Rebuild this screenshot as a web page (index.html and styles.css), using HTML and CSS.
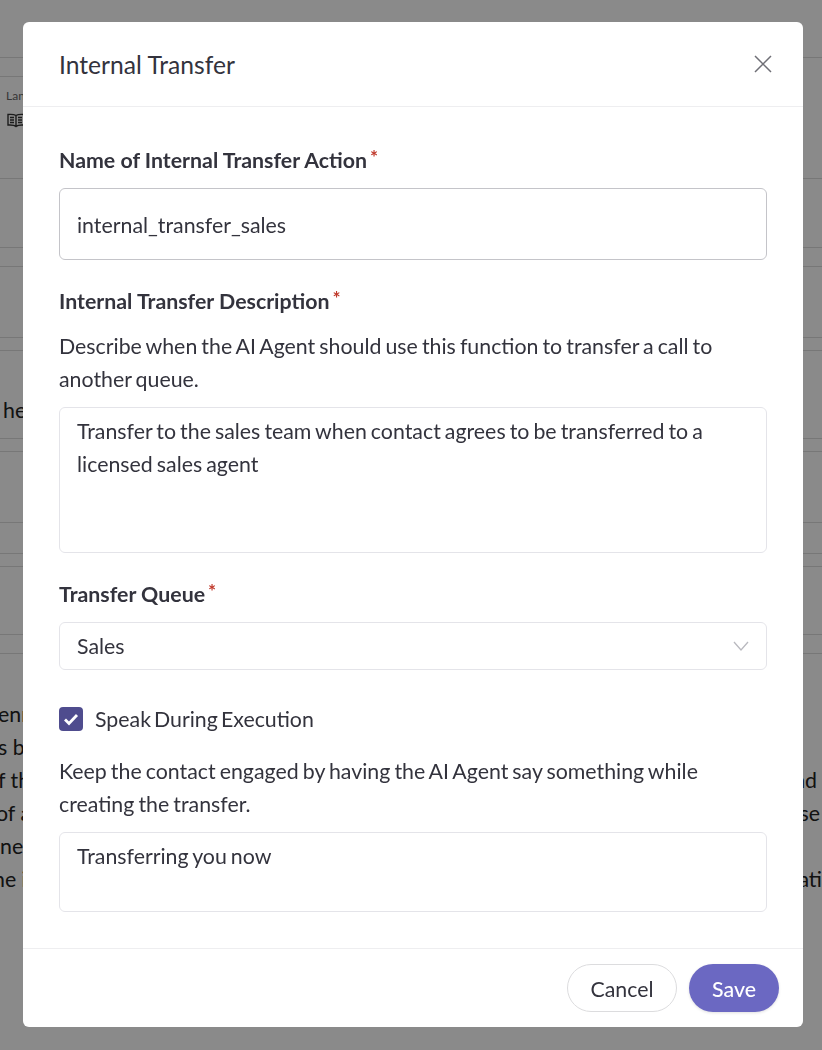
FILE: index.html
```html
<!DOCTYPE html>
<html lang="en">
<head>
<meta charset="utf-8">
<title>Internal Transfer</title>
<link rel="stylesheet" href="styles.css">
</head>
<body>
<div class="page">
  <div class="row h58"></div>
  <div class="row h121 split">
    <div class="sub s19"></div>
    <div class="sub s71">
      <div class="mini">Language</div>
      <svg class="book" width="20" height="16" viewBox="0 0 20 16" fill="none" stroke="#333" stroke-width="1.400"><path d="M9 2.500C7.500 1.500 4 1.300 1 1.500v10.500c3-.2 6.500 0 8 1.500 1.500-1.500 5-1.700 8-1.500V1.500c-3-.2-6.500 0-8 1zM9 2.500v11M3 4.500h4M3 7h4M3 9.500h4M11 4.500h4M11 7h4M11 9.500h4"/></svg>
    </div>
  </div>
  <div class="row h69"></div>
  <div class="row h19"></div>
  <div class="row h71"></div>
  <div class="row h13"></div>
  <div class="row h88"><span class="frag">he</span></div>
  <div class="row h13"></div>
  <div class="row h71"></div>
  <div class="row h31"></div>
  <div class="row h13"></div>
  <div class="row h68"></div>
  <div class="row h19"></div>
  <div class="para">
    <div class="pl"><span>enn</span></div>
    <div class="pl"><span>s b</span></div>
    <div class="pl"><span>f th</span><span>nd</span></div>
    <div class="pl"><span class="sh4">of a</span><span class="r2">se</span></div>
    <div class="pl"><span class="sh2">ne</span></div>
    <div class="pl"><span class="sh7">ne i</span><span class="r3">ati</span></div>
  </div>
</div>

<div class="overlay">
  <div class="modal">
    <header class="head">
      <h1 class="title">Internal Transfer</h1>
      <svg class="close" width="18" height="18" viewBox="0 0 18 18" fill="none" stroke="#6f6f76" stroke-width="1.5"><path d="M1 1l16 16M17 1L1 17"/></svg>
    </header>
    <div class="body">
      <div class="label">Name of Internal Transfer Action<span class="req">*</span></div>
      <div class="field f-name">internal_transfer_sales</div>
      <div class="label next">Internal Transfer Description<span class="req">*</span></div>
      <p class="desc">Describe when the AI Agent should use this function to transfer a call to another queue.</p>
      <div class="field area f-desc">Transfer to the sales team when contact agrees to be transferred to a licensed sales agent</div>
      <div class="label next">Transfer Queue<span class="req">*</span></div>
      <div class="field f-sel">
        <span>Sales</span>
        <svg width="16" height="10" viewBox="0 0 16 10" fill="none" stroke="#b9b9bf" stroke-width="1.300"><path d="M1 1l7 8 7-8"/></svg>
      </div>
      <div class="check">
        <span class="box"><svg width="16" height="13" viewBox="0 0 16 13" fill="none" stroke="#fff" stroke-width="2.800"><path d="M2 6.500l4 4 8-8.500"/></svg></span>
        <span class="speak">Speak During Execution</span>
      </div>
      <p class="desc">Keep the contact engaged by having the AI Agent say something while creating the transfer.</p>
      <div class="field area f-say">Transferring you now</div>
    </div>
    <footer class="foot">
      <button class="btn cancel">Cancel</button>
      <button class="btn save">Save</button>
    </footer>
  </div>
</div>
</body>
</html>
```
FILE: styles.css
```css
* { box-sizing: border-box; }
html, body { margin: 0; height: 100%; }
body { font-family: Lato, "Open Sans", sans-serif; color: #33333d; background: #fff; overflow: hidden; }
.page { height: 1050px; overflow: hidden; color: #222; font-size: 21.33px; }
.row { border-bottom: 1px solid #dcdcdc; }
.h58 { height: 58px; }
.h121 { height: 121px; }
.h69 { height: 69px; }
.h19 { height: 19px; }
.h71 { height: 71px; }
.h13 { height: 13px; }
.h88 { height: 88px; padding: 43px 0 0 3px; line-height: 33px; }
.h31 { height: 31px; }
.h68 { height: 68px; }
.split { display: flex; flex-direction: column; }
.sub { width: 200px; padding-left: 6px; border-bottom: 1px solid #dcdcdc; }
.sub:last-child { border-bottom: 0; }
.s19 { height: 19px; }
.s71 { height: 71px; padding-top: 12px; }
.mini { font-size: 12px; line-height: 14px; color: #666; }
.book { display: block; margin-top: 10px; margin-left: 1px; }
.para { padding-top: 44px; line-height: 33px; overflow: hidden; }
.pl { display: flex; justify-content: space-between; height: 33px; padding-right: 5px; margin-left: -2px; }
.sh2 { margin-left: 2px; }
.sh4 { margin-left: -2px; }
.sh7 { margin-left: -5px; }
.r2 { margin-right: -3px; }
.r3 { margin-right: -5px; }
.overlay { position: fixed; inset: 0; background: rgba(0,0,0,.46); }
.modal { position: absolute; left: 23px; top: 22px; width: 780px; height: 1005px; background: #fff; border-radius: 6px; display: flex; flex-direction: column; }
.head { height: 85px; border-bottom: 1px solid #eeeef0; display: flex; align-items: center; justify-content: space-between; padding: 0 31px 0 36px; flex: none; }
.title { margin: 0; font-size: 24.67px; font-weight: 400; line-height: 33px; }
.close { margin-top: -1px; }
.body { flex: 1; padding: 37px 36px 0; font-size: 21.33px; line-height: 33px; }
.label { font-weight: 700; height: 33px; }
.next { margin-top: 25px; }
.req { color: #c0392b; font-size: 19px; font-weight: 700; line-height: 0; position: relative; top: -4px; margin-left: 3px; }
.desc { margin: 12px 0 0; word-spacing: -1.4px; }
.field { margin-top: 11px; border: 1px solid #e4e4e9; border-radius: 6px; padding: 0 16px 0 17px; }
.f-name { height: 72px; border-color: #c4c4c9; line-height: 72px; }
.area { padding-top: 7px; word-spacing: -1.4px; }
.f-desc { height: 146px; }
.f-sel { height: 48px; display: flex; align-items: center; justify-content: space-between; padding-right: 17px; }
.f-say { height: 80px; }
.check { display: flex; align-items: center; gap: 12px; margin-top: 37px; height: 24px; }
.speak { word-spacing: -2.4px; }
.box { width: 24px; height: 24px; border-radius: 4px; background: #4f4c8e; display: flex; align-items: center; justify-content: center; }
.check + .desc { margin-top: 24px; }
.foot { height: 79px; flex: none; border-top: 1px solid #eeeef0; display: flex; justify-content: flex-end; align-items: flex-start; gap: 12px; padding: 15px 24px 0 0; }
.btn { height: 48px; border-radius: 24px; font: 400 21.33px/1 Lato, sans-serif; padding: 3px 0 0; }
.cancel { width: 110px; background: #fff; border: 1px solid #dcdcde; color: #33333d; }
.save { width: 90px; background: #6b68c2; border: 0; color: #fff; font-weight: 500; box-shadow: 0 1px 3px rgba(0,0,0,.12); }
```
